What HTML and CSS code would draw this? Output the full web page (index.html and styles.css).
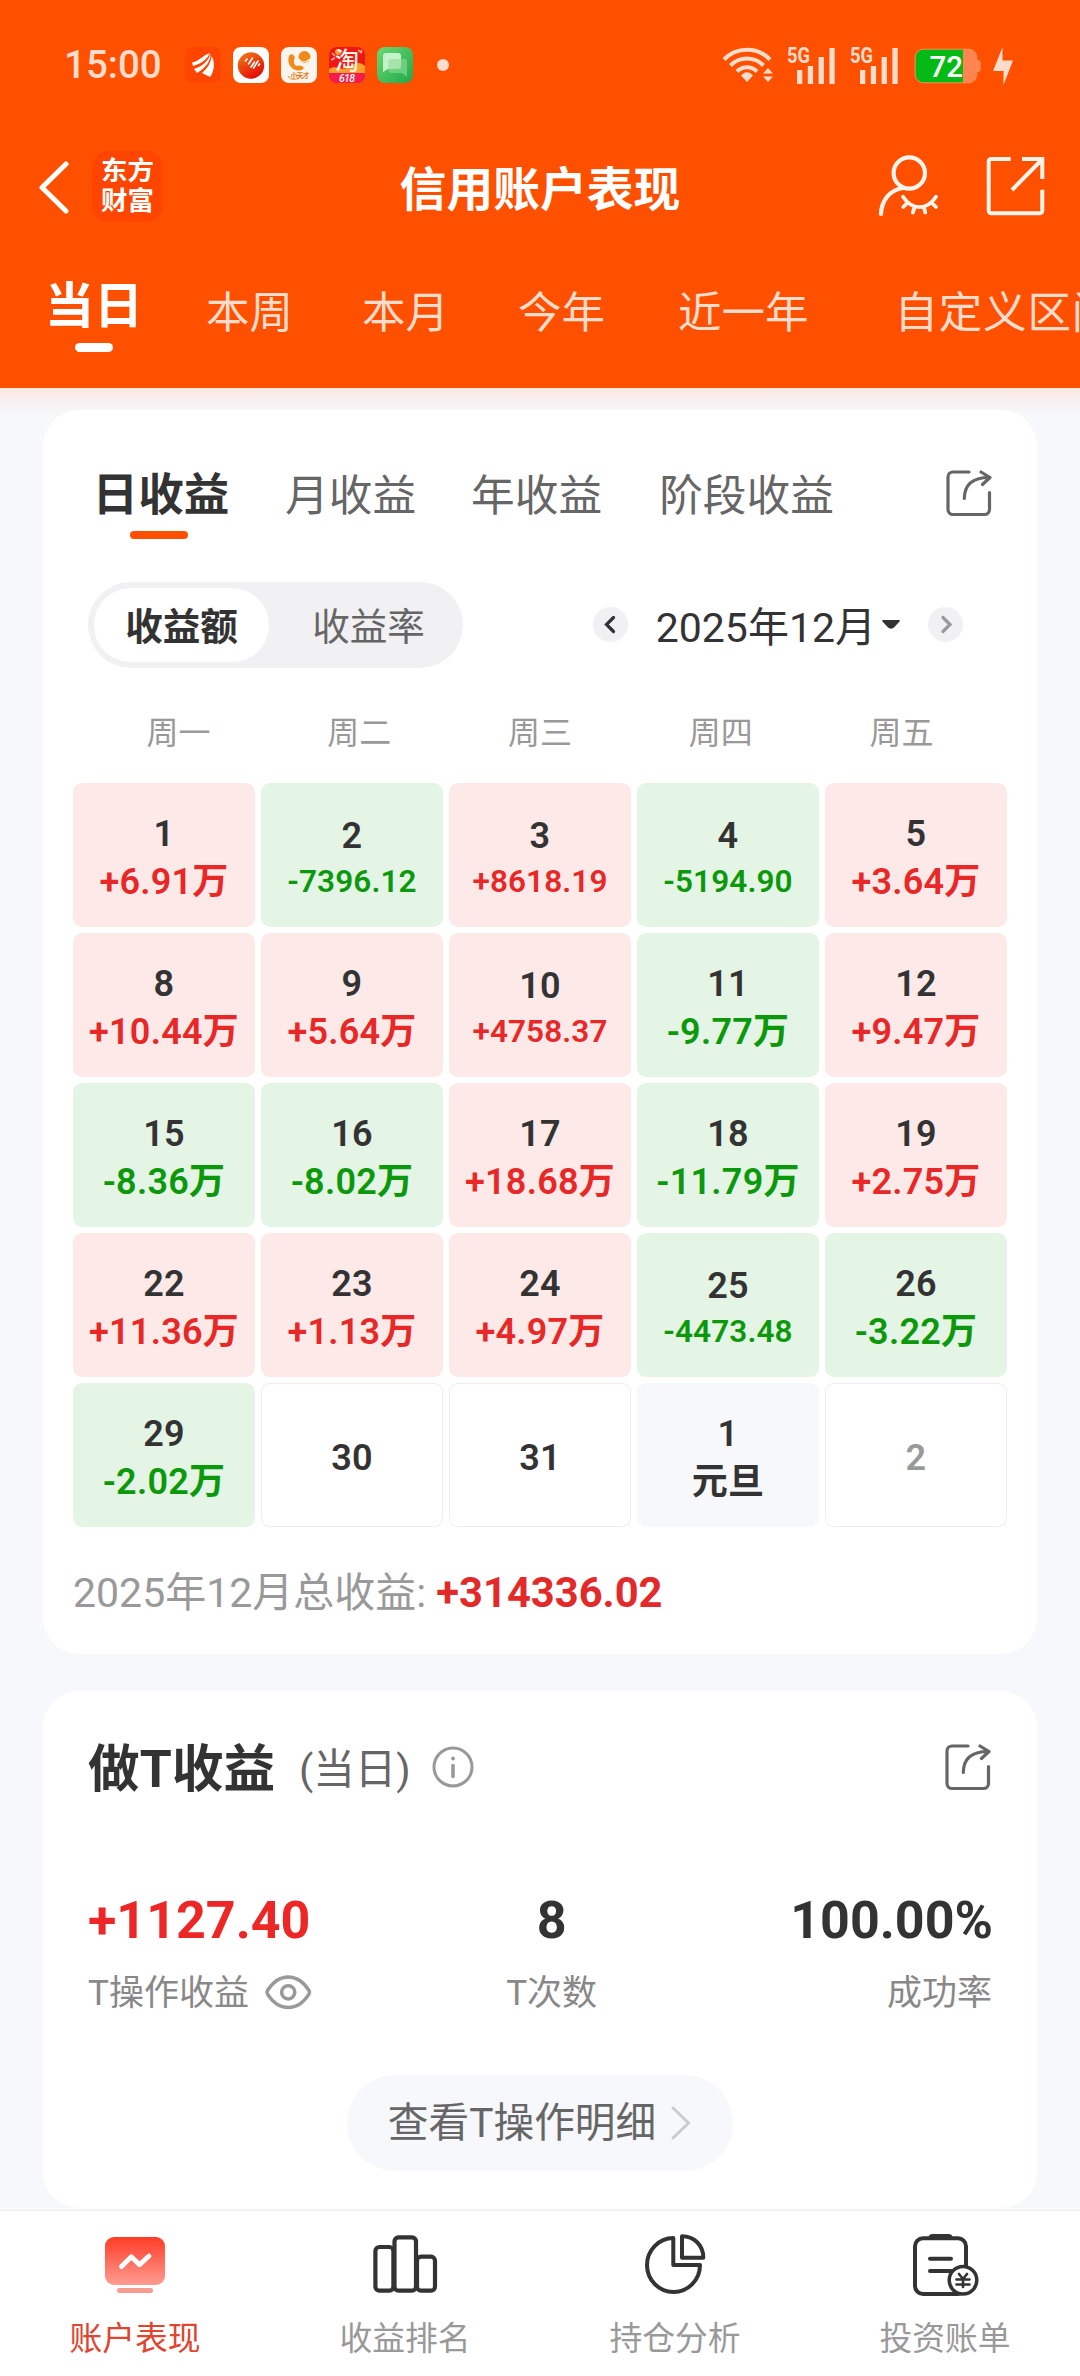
FILE: index.html
```html
<!DOCTYPE html>
<html lang="zh-CN">
<head>
<meta charset="utf-8">
<title>信用账户表现</title>
<link rel="stylesheet" href="styles.css">
</head>
<body>
<svg class="defs" width="0" height="0">
  <symbol id="share" viewBox="0 0 50 50">
    <path d="M25 4H9a5 5 0 0 0-5 5v32.500a5 5 0 0 0 5 5h31.500a5 5 0 0 0 5-5V24.500M20.300 30.500C20.500 17 28 9.500 45 9.500M37 4l9 5.500-7.500 7" fill="none" stroke="#666" stroke-width="3.200" stroke-linecap="round" stroke-linejoin="round"/>
  </symbol>
</svg>

<header class="header">
  <div class="status">
    <span class="clock">15:00</span>
    <div class="apps">
      <svg width="36" height="36" viewBox="0 0 36 36">
        <rect width="36" height="36" rx="8" fill="#ff4500"/>
        <path d="M7 15.500C15 14 18 8 25 6c-2 5-7 10-17 13zM9 22c9-3 14-8 16.500-15C26 13 21 21 12 26zM17 26c6-5 9-11 9.500-17 3 4 2.500 11 2 13-1 4-2 6-3.500 8z" fill="#fff"/>
      </svg>
      <svg width="36" height="36" viewBox="0 0 36 36">
        <defs><linearGradient id="disc" x1="0" y1="0" x2=".6" y2="1"><stop offset="0" stop-color="#f08018"/><stop offset="1" stop-color="#e60c05"/></linearGradient></defs>
        <rect width="36" height="36" rx="8" fill="#fff"/>
        <circle cx="18" cy="18.500" r="13.200" fill="url(#disc)"/>
        <path d="M12.500 14l1.500-2M15.500 17l4-6M18 20l3.500-5M20.500 21l4.500-7M25.500 18.500l1-1.500" stroke="#fff" stroke-width="1.600" stroke-linecap="round"/>
      </svg>
      <svg width="36" height="36" viewBox="0 0 36 36">
        <rect width="36" height="36" rx="8" fill="#fbf5f0"/>
        <circle cx="23.500" cy="10" r="6" fill="#f28a18"/>
        <path d="M18 12c2 4 7 4 11 0" fill="none" stroke="#fbf5f0" stroke-width="1.200"/>
        <path d="M8 9c2-3 5-2 6 2-2 3-1 6 1 8 3-1 6-1 8 2-3 4-10 3-13-1C7 17 7 12 8 9z" fill="#f28a18"/>
        <path d="M7 29c2 4 8 4 11 2" fill="none" stroke="#f28a18" stroke-width="1"/>
        <text x="9.500" y="31" font-size="7" font-weight="700" textLength="19" fill="#e87a10">小天才</text>
      </svg>
      <svg class="tile" width="36" height="36" viewBox="0 0 36 36">
        <rect width="36" height="36" rx="8" fill="#ee1717"/>
        <path d="M0 22C8 17 12 25 20 20S31 15 36 19v8H0z" fill="#ff9d2e"/>
        <circle cx="9" cy="5" r="3" fill="#ff9d2e"/>
        <path d="M3 6l3 3M29 3l4 3M31 6l2-3M2 13l4-2" stroke="#ffb49a" stroke-width="1.500"/>
        <path d="M0 26h36v2a8 8 0 0 1-8 8H8a8 8 0 0 1-8-8z" fill="#f51b4c"/>
        <text x="6" y="21.500" font-size="24" font-weight="500" fill="#fff3e6">淘</text>
        <text x="10" y="35" font-size="10.500" font-style="italic" font-weight="500" textLength="16" fill="#fff">618</text>
      </svg>
      <svg width="36" height="36" viewBox="0 0 36 36">
        <defs><linearGradient id="chat" x1="0" y1="0" x2="1" y2="1"><stop offset="0" stop-color="#6cd873"/><stop offset="1" stop-color="#20a849"/></linearGradient></defs>
        <rect width="36" height="36" rx="8" fill="url(#chat)"/>
        <path d="M6 9a3 3 0 0 1 3-3h12a3 3 0 0 1 3 3v10a3 3 0 0 1-3 3h-10l-5 3z" fill="#c5f2c9"/>
        <path d="M11.500 15a3 3 0 0 1 3-3H27a3 3 0 0 1 3 3v15l-5-4H14.500a3 3 0 0 1-3-3z" fill="#8fdc9a" fill-opacity=".6"/>
      </svg>
    </div>
    <i class="dot"></i>
    <div class="indicators">
      <svg width="60" height="42" viewBox="0 0 60 42">
        <path d="M4 15.500A32 32 0 0 1 50 15.500M10.500 21.500A23 23 0 0 1 43.500 21.500M17 27.500A14 14 0 0 1 37 27.500" fill="none" stroke="#ffdccc" stroke-width="4"/>
        <path d="M21 31.500c3.500-4.500 8.500-4.500 12 0l-6 6.500zM43 29.500l5-5.500 5 5.500zM43 32.500h10l-5 5.500z" fill="#ffdccc"/>
      </svg>
      <svg class="sim" width="52" height="40" viewBox="0 0 52 40" fill="#ffdccc">
        <text x="1" y="18" font-size="22" font-weight="700" textLength="23" lengthAdjust="spacingAndGlyphs">5G</text>
        <path d="M11 25h5.300v14H11zM21.800 21h5.300v18h-5.300zM32.600 12h5.300v27h-5.300zM43.400 3h5.300v36h-5.300z"/>
      </svg>
      <svg class="sim second" width="52" height="40" viewBox="0 0 52 40" fill="#ffdccc">
        <text x="1" y="18" font-size="22" font-weight="700" textLength="23" lengthAdjust="spacingAndGlyphs">5G</text>
        <path d="M11 25h5.300v14H11zM21.800 21h5.300v18h-5.300zM32.600 12h5.300v27h-5.300zM43.400 3h5.300v36h-5.300z"/>
      </svg>
      <svg class="battery" width="68" height="36" viewBox="0 0 68 36">
        <path d="M63 12c4 0 4 2 4 6s0 6-4 6z" fill="#ff8450"/>
        <rect x="1" y="1" width="62" height="34" rx="8.500" fill="#ff8450"/>
        <path d="M49 1.500H9.500A8 8 0 0 0 1.500 9.500v17a8 8 0 0 0 8 8H49z" fill="#06ba16"/>
        <rect x="1" y="1" width="62" height="34" rx="8.500" fill="none" stroke="#ff9a62" stroke-opacity=".6"/>
        <text x="15.500" y="29.300" font-size="29.500" font-weight="500" textLength="33.500" lengthAdjust="spacingAndGlyphs" fill="#fff">72</text>
      </svg>
      <svg class="bolt" width="22" height="38" viewBox="0 0 22 38"><path d="M10.500 0v13.500H21L11.500 38V24H1z" fill="#ffdccc"/></svg>
    </div>
  </div>

  <div class="nav">
    <div class="nav-left">
      <svg width="32" height="56" viewBox="0 0 32 56"><path d="M29 4L5 27.500 29 51" fill="none" stroke="#fff" stroke-width="5" stroke-linecap="round" stroke-linejoin="round"/></svg>
      <div class="logo"><span>东方</span><span>财富</span></div>
    </div>
    <h1>信用账户表现</h1>
    <div class="nav-right">
      <svg width="64" height="68" viewBox="0 0 64 68" fill="none" stroke="#fff4ec" stroke-width="4.200" stroke-linecap="round">
        <circle cx="33.300" cy="21" r="15.700"/>
        <path d="M27 36C13 38 5.500 49 5 62"/>
        <path d="M27 44.700C36 58.500 51 58.500 60 44.700M27.200 55l4-4M60 55l-4-4M36.800 60.500l2-5.500M49.300 60.500l-1.500-5.500" stroke-width="3.800"/>
      </svg>
      <svg width="62" height="64" viewBox="0 0 62 64" fill="none" stroke="#fff4ec" stroke-width="4">
        <path d="M26.700 5H7.200a2.500 2.500 0 0 0-2.500 2.500v49.300a2.500 2.500 0 0 0 2.500 2.500h48.600a2.500 2.500 0 0 0 2.500-2.500V35.700M38 5h20.300v20M28 36L58 5.500"/>
      </svg>
    </div>
  </div>

  <nav class="ranges">
    <span class="range on">当日</span>
    <span class="range r1">本周</span>
    <span class="range r2">本月</span>
    <span class="range r3">今年</span>
    <span class="range r4">近一年</span>
    <span class="range r5">自定义区间</span>
  </nav>
</header>

<main>
  <section class="card calendar">
    <div class="tabs">
      <span class="tab on">日收益</span>
      <span class="tab t1">月收益</span>
      <span class="tab t2">年收益</span>
      <span class="tab t3">阶段收益</span>
      <svg class="share" width="50" height="50"><use href="#share"/></svg>
    </div>
    <div class="controls">
      <div class="segment"><span class="on">收益额</span><span class="off">收益率</span></div>
      <div class="month">
        <svg width="35" height="35" viewBox="0 0 35 35"><circle cx="17.500" cy="17.500" r="17.500" fill="#f1f1f4"/><path d="M20.500 10.500L13.500 17.500l7 7" fill="none" stroke="#333" stroke-width="3.200" stroke-linecap="round"/></svg>
        <span class="month-name">2025年12月</span>
        <svg class="caret" width="18" height="9" viewBox="0 0 18 9"><path d="M1 0h16c1 0 1 1 .5 1.500L12 7.500c-1.500 1.500-4.500 1.500-6 0L.5 1.500C0 1 0 0 1 0z" fill="#333"/></svg>
        <svg width="35" height="35" viewBox="0 0 35 35"><circle cx="17.500" cy="17.500" r="17.500" fill="#f1f1f4"/><path d="M15 10.500l7 7-7 7" fill="none" stroke="#999" stroke-width="3.200" stroke-linecap="round"/></svg>
      </div>
    </div>
    <div class="weekdays"><span>周一</span><span>周二</span><span>周三</span><span>周四</span><span>周五</span></div>
    <div class="days">
      <div class="day up"><b>1</b><em>+6.91万</em></div>
      <div class="day down fine"><b>2</b><em>-7396.12</em></div>
      <div class="day up fine"><b>3</b><em>+8618.19</em></div>
      <div class="day down fine"><b>4</b><em>-5194.90</em></div>
      <div class="day up"><b>5</b><em>+3.64万</em></div>
      <div class="day up"><b>8</b><em>+10.44万</em></div>
      <div class="day up"><b>9</b><em>+5.64万</em></div>
      <div class="day up fine"><b>10</b><em>+4758.37</em></div>
      <div class="day down"><b>11</b><em>-9.77万</em></div>
      <div class="day up"><b>12</b><em>+9.47万</em></div>
      <div class="day down"><b>15</b><em>-8.36万</em></div>
      <div class="day down"><b>16</b><em>-8.02万</em></div>
      <div class="day up"><b>17</b><em>+18.68万</em></div>
      <div class="day down"><b>18</b><em>-11.79万</em></div>
      <div class="day up"><b>19</b><em>+2.75万</em></div>
      <div class="day up"><b>22</b><em>+11.36万</em></div>
      <div class="day up"><b>23</b><em>+1.13万</em></div>
      <div class="day up"><b>24</b><em>+4.97万</em></div>
      <div class="day down fine"><b>25</b><em>-4473.48</em></div>
      <div class="day down"><b>26</b><em>-3.22万</em></div>
      <div class="day down"><b>29</b><em>-2.02万</em></div>
      <div class="day blank"><b>30</b></div>
      <div class="day blank"><b>31</b></div>
      <div class="day holiday"><b>1</b><em>元旦</em></div>
      <div class="day blank other"><b>2</b></div>
    </div>
    <p class="total">2025年12月总收益: <strong>+314336.02</strong></p>
  </section>

  <section class="card trades">
    <div class="trades-head">
      <h2>做T收益</h2>
      <span class="when">(当日)</span>
      <svg width="42" height="42" viewBox="0 0 42 42" fill="none" stroke="#999" stroke-linecap="round"><circle cx="21" cy="21" r="19" stroke-width="3"/><path d="M21 19.500v11" stroke-width="3.600"/><circle cx="21" cy="12.500" r="2" fill="#999" stroke="none"/></svg>
      <svg class="share" width="50" height="50"><use href="#share"/></svg>
    </div>
    <div class="stats">
      <div class="stat"><strong class="gain">+1127.40</strong><span>T操作收益
        <svg width="50" height="40" viewBox="0 0 50 40" fill="none" stroke="#999" stroke-width="3.500"><path d="M4.500 18.500C16 .5 34.500 .5 46 18.500q1.200 1.800 0 3.600C34.500 40 16 40 4.500 22.100q-1.200-1.800 0-3.600z"/><circle cx="25.200" cy="20.300" r="6.600"/></svg></span></div>
      <div class="stat mid"><strong>8</strong><span>T次数</span></div>
      <div class="stat end"><strong>100.00%</strong><span>成功率</span></div>
    </div>
    <div class="more"><span>查看T操作明细</span><svg width="22" height="36" viewBox="0 0 22 36"><path d="M3 3l15.500 15L3 33" fill="none" stroke="#ccc" stroke-width="3" stroke-linecap="round"/></svg></div>
  </section>
</main>

<footer class="tabbar">
  <div class="item on">
    <svg width="66" height="66" viewBox="0 0 66 66">
      <defs><linearGradient id="screen" x1="0" y1="0" x2="0" y2="1"><stop offset="0" stop-color="#ff3c26"/><stop offset="1" stop-color="#ff9c92"/></linearGradient></defs>
      <rect x="3" y="5" width="60" height="48" rx="9" fill="url(#screen)"/><rect x="15" y="56" width="36" height="5" rx="2.500" fill="#f49d90"/>
      <path d="M19.500 34.500l9.800-9.800 8.200 8 9.500-8.700" fill="none" stroke="#fff" stroke-width="4.800" stroke-linecap="round" stroke-linejoin="round"/>
    </svg>
    <span>账户表现</span>
  </div>
  <div class="item">
    <svg width="66" height="66" viewBox="0 0 66 66" fill="none" stroke="#333" stroke-width="4.200">
      <rect x="3.400" y="15" width="18" height="43.700" rx="4"/><rect x="22.500" y="5.300" width="21.500" height="53.400" rx="4"/><rect x="45" y="24.700" width="18" height="34" rx="4"/>
    </svg>
    <span>收益排名</span>
  </div>
  <div class="item">
    <svg width="66" height="66" viewBox="0 0 66 66" fill="none" stroke="#333" stroke-width="4" stroke-linejoin="round">
      <path d="M31.300 6v27H58A26.500 27 0 1 1 31.300 6zM40 4.300v21.400h21.300C61.300 13 52 4.300 40 4.300z"/>
    </svg>
    <span>持仓分析</span>
  </div>
  <div class="item">
    <svg width="68" height="66" viewBox="0 0 68 66" fill="none" stroke="#333" stroke-width="4" stroke-linecap="round">
      <rect x="4" y="6.300" width="51" height="55.700" rx="8"/>
      <path d="M17.500 7c0-4 1-5 5-5h14c4 0 5 1 5 5z" fill="#333" stroke="none"/>
      <path d="M19 26.700h21M19 39h21"/>
      <circle cx="52" cy="48.300" r="13.800" fill="#fff" stroke-width="3.500"/>
      <path d="M48 42l4 5 4-5M52 47v8M45.500 47.500h13M45.500 52.500h13" stroke-width="2.600"/>
    </svg>
    <span>投资账单</span>
  </div>
</footer>
</body>
</html>
```
FILE: styles.css
```css
* { box-sizing: border-box; margin: 0; padding: 0; }
body {
  width: 1080px; height: 2376px; overflow: hidden;
  display: flex; flex-direction: column;
  background: #f7f8fb; color: #333;
  font-family: Roboto, "Noto Sans CJK SC", sans-serif;
  white-space: nowrap;
}
svg { display: block; flex: none; }
.defs { position: absolute; }

/* header */
.header { height: 388px; background: #ff5000; color: #fff; flex: none; overflow: hidden; }
.status { height: 130px; display: flex; align-items: center; padding-left: 64px; }
.clock { width: 121px; font-size: 38.5px; font-weight: 500; line-height: 44px; color: #ffdccc; }
.apps { display: flex; gap: 12px; }
.tile, .sim { overflow: visible; }
.dot { width: 12px; height: 12px; border-radius: 50%; background: #ffdccc; margin-left: 24px; }
.indicators { display: flex; align-items: center; margin-left: auto; padding-right: 66px; }
.sim { margin-left: 6px; }
.sim.second { margin-left: 11px; }
.battery { margin: 2px 0 0 13px; }
.bolt { margin: 2px 0 0 10px; }

.nav { height: 116px; display: grid; grid-template-columns: 1fr auto 1fr; align-items: center; }
.nav-left { display: flex; align-items: center; padding-left: 37px; gap: 23px; }
.logo {
  width: 71px; height: 71px; border-radius: 16px; background: #ff4500; margin-top: -4px;
  display: flex; flex-direction: column; align-items: center; justify-content: center;
  font-size: 26.5px; line-height: 30px; font-weight: 700;
}
h1 { font-size: 46.8px; line-height: 60px; font-weight: 700; padding-top: 4px; }
.nav-right { display: flex; justify-content: flex-end; align-items: center; padding-right: 34px; gap: 44px; margin-top: -4px; }

.ranges { display: flex; height: 142px; padding: 38px 0 0 45px; align-items: flex-start; }
.range { font-size: 43.5px; line-height: 60px; color: #ffdccc; flex: none; }
.range.on {
  width: 98px; font-size: 49px; line-height: 46px; font-weight: 700; color: #fff;
  display: flex; flex-direction: column; align-items: center;
}
.range.on::after { content: ""; width: 38px; height: 9px; border-radius: 5px; background: #fff; margin-top: 13px; }
.r1 { margin-left: 63px; }
.r2 { margin-left: 69px; }
.r3 { margin-left: 69px; }
.r4 { margin-left: 73px; }
.r5 { margin-left: 86px; letter-spacing: .8px; }

/* cards */
main {
  height: 1822px; padding: 22px 43px 0; flex: none;
  background: linear-gradient(#fde8e1, #f6efee 12px, #f7f8fb 27px);
}
.card { background: #fff; border-radius: 36px; }
.calendar { height: 1244px; padding: 58px 30px 0; }
.tabs { display: flex; align-items: flex-start; height: 114px; padding-left: 20px; }
.tab { font-size: 43.7px; line-height: 56px; color: #666; }
.tab.on { width: 136px; font-size: 45.6px; font-weight: 700; color: #333; display: flex; flex-direction: column; align-items: center; }
.tab.on::after { content: ""; width: 58px; height: 8px; border-radius: 4px; background: #ff5000; margin-top: 7px; margin-right: 4px; }
.t1 { margin-left: 56px; }
.t2 { margin-left: 55px; }
.t3 { margin-left: 57px; }
.share { margin-left: auto; margin-right: 13px; }

.controls { display: flex; justify-content: space-between; align-items: center; height: 86px; padding: 0 44px 0 15px; }
.segment { width: 375px; height: 86px; padding: 6px; border-radius: 43px; background: #f1f1f4; display: flex; font-size: 37.6px; line-height: 74px; color: #666; }
.segment span { width: 188px; text-align: center; padding-top: 2px; height: 74px; }
.segment .on { width: 175px; background: #fff; border-radius: 37px; font-weight: 700; color: #333; }
.segment .off { padding-left: 11px; }
.month { display: flex; align-items: center; margin-top: -2px; }
.month-name { font-size: 41px; line-height: 50px; margin-left: 28px; padding-top: 7px; }
.caret { margin: 0 28px 0 6px; }

.weekdays { display: grid; grid-template-columns: repeat(5, 1fr); margin: 42px 15px 26px; font-size: 32px; line-height: 47px; color: #999; text-align: center; }
.days { display: grid; grid-template-columns: repeat(5, 182px); grid-auto-rows: 144px; gap: 6px; }
.day { border-radius: 9px; padding-top: 5px; display: flex; flex-direction: column; align-items: center; justify-content: center; letter-spacing: .25px; }
.day b, .day em { font-size: 36px; line-height: 48px; font-weight: 600; }
.day em { font-style: normal; }
.day.fine em { font-size: 31.5px; line-height: 44px; letter-spacing: .1px; }
.up { background: #fde9e8; }
.up em { color: #e82727; }
.down { background: #e4f4e5; }
.down em { color: #0b990b; }
.blank { border: 1px solid #ededed; }
.holiday { background: #f7f8fa; }
.other { color: #999; }
.total { font-size: 41px; line-height: 50px; margin-top: 41px; color: #999; }
.total strong { font-size: 41.7px; color: #e32a2a; font-weight: 700; }

.trades { height: 517px; margin-top: 37px; padding: 51px 45px 0; }
.trades-head { display: flex; height: 50px; align-items: center; }
h2 { font-size: 51.7px; line-height: 50px; font-weight: 700; padding-top: 6px; }
.when { font-size: 41.5px; line-height: 50px; color: #666; margin: 0 21px 0 24px; padding-top: 5px; }
.trades-head .share { margin-right: -1px; }
.stats { display: flex; justify-content: space-between; margin-top: 98px; color: #333; }
.stat { display: flex; flex-direction: column; gap: 17px; }
.stat strong { font-size: 52px; line-height: 62px; font-weight: 700; }
.stat span { font-size: 35px; line-height: 50px; color: #888; display: flex; align-items: center; gap: 14px; height: 50px; }
.stat svg { margin-top: -4px; }
.stat .gain { color: #ed2626; }
.mid { align-items: center; }
.end { align-items: flex-end; }
.end strong { margin-right: -1px; }
.more {
  width: 386px; height: 96px; border-radius: 48px; background: #f7f8fb; margin: 56px auto 0;
  display: flex; align-items: center; justify-content: center; gap: 14px;
  font-size: 40.7px; line-height: 50px; color: #666;
}

/* bottom bar */
.tabbar { height: 166px; flex: none; background: #fff; border-top: 1px solid #ebecee; display: grid; grid-template-columns: repeat(4, 1fr); }
.item { display: flex; flex-direction: column; align-items: center; padding-top: 21px; gap: 17px; font-size: 32.8px; line-height: 48px; color: #999; }
.item.on { color: #e0452f; }
```
